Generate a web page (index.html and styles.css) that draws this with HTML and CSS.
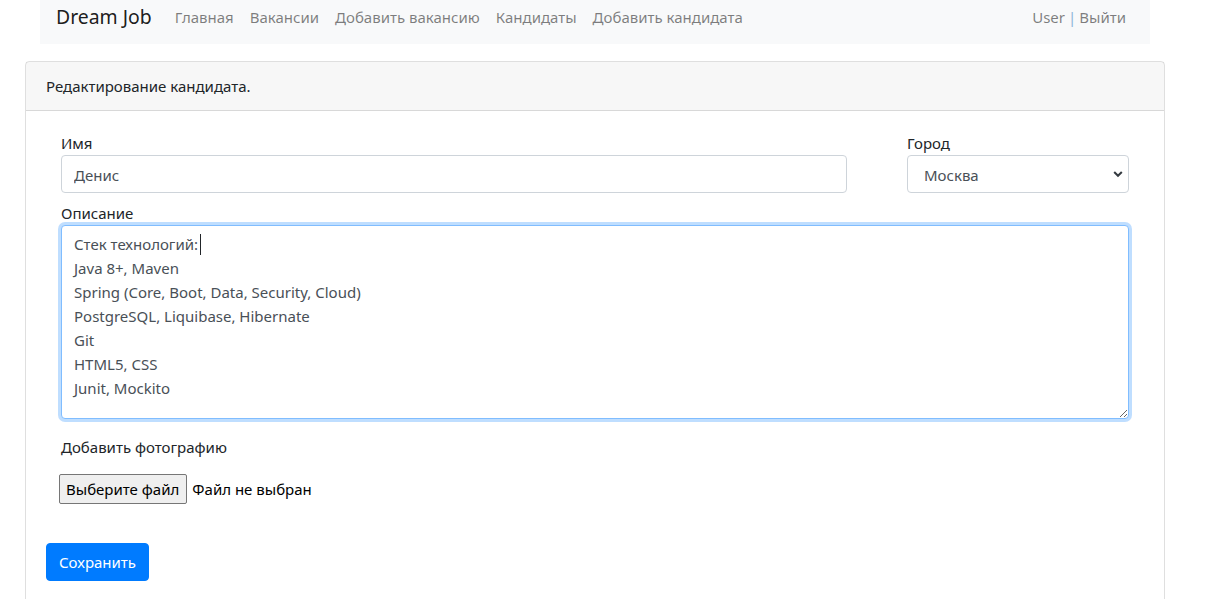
FILE: index.html
```html
<!DOCTYPE html>
<html lang="ru">
<head>
<meta charset="utf-8">
<title>Dream Job</title>
<link rel="stylesheet" href="styles.css">
</head>
<body>
<div class="page">
  <nav class="navbar">
    <a class="brand" href="#">Dream Job</a>
    <ul class="nav-links">
      <li><a href="#">Главная</a></li>
      <li><a href="#">Вакансии</a></li>
      <li><a href="#">Добавить вакансию</a></li>
      <li><a href="#">Кандидаты</a></li>
      <li><a href="#">Добавить кандидата</a></li>
    </ul>
    <div class="nav-user"><a href="#">User</a><span class="sep">|</span><a href="#">Выйти</a></div>
  </nav>

  <div class="card">
    <div class="card-header">Редактирование кандидата.</div>
    <div class="card-body">
      <form class="form">
        <div class="row">
          <div class="field field-name">
            <label for="name">Имя</label>
            <input id="name" class="control" type="text" value="Денис">
          </div>
          <div class="field field-city">
            <label for="city">Город</label>
            <div class="select-wrap">
              <select id="city" class="control select">
                <option>Москва</option>
                <option>Санкт-Петербург</option>
              </select>
              <svg class="chev" width="10" height="8" viewBox="0 0 10 8"><path d="M1.2 2 L5 5.8 L8.8 2" fill="none" stroke="#343a40" stroke-width="2"/></svg>
            </div>
          </div>
        </div>
        <div class="field">
          <label for="desc">Описание</label>
          <div class="ta-wrap">
            <textarea id="desc" class="control textarea focused" rows="7">Стек технологий:
Java 8+, Maven
Spring (Core, Boot, Data, Security, Cloud)
PostgreSQL, Liquibase, Hibernate
Git
HTML5, CSS
Junit, Mockito</textarea>
            <span class="caret"></span>
          </div>
        </div>
        <div class="field photo">
          <label for="file">Добавить фотографию</label>
          <div class="file-row">
            <span class="file-btn">Выберите файл</span><span class="file-text">Файл не выбран</span>
          </div>
        </div>
      </form>
      <button class="btn-save" type="button">Сохранить</button>
    </div>
  </div>
</div>
</body>
</html>
```

FILE: styles.css
```css
* { box-sizing: border-box; }
html, body { margin: 0; padding: 0; }
body {
  font-family: "Noto Sans", "Open Sans", sans-serif;
  font-size: 15px;
  line-height: 24px;
  color: #212529;
  background: #fff;
}
a { text-decoration: none; }
.page { padding: 0 42px 0 25px; }

.navbar {
  margin: 0 15px;
  height: 44px;
  background: #f8f9fa;
  display: flex;
  align-items: flex-start;
  padding: 4px 16px 0;
}
.brand {
  font-size: 19.4px;
  line-height: 26px;
  color: rgba(0,0,0,.9);
  margin-right: 15px;
}
.nav-links {
  display: flex;
  list-style: none;
  margin: 0;
  padding: 1px 0 0;
  flex: 1;
}
.nav-links a, .nav-user a {
  color: rgba(0,0,0,.5);
  padding: 0 8px;
  display: block;
}
.nav-user { display: flex; align-items: center; padding-top: 1px; }
.nav-user a:first-child { padding-right: 0; }
.nav-user .sep { color: #8db4d8; padding: 0 3px; }
.nav-user a:last-child { padding-left: 0; }

.card {
  margin-top: 17px;
  border: 1px solid rgba(0,0,0,.125);
  border-radius: 4px;
  height: 560px;
}
.card-header {
  background: rgba(0,0,0,.03);
  border-bottom: 1px solid rgba(0,0,0,.125);
  padding: 12px 20px;
  height: 49px;
}
.card-body { padding: 20px; }
.form { padding: 0 15px; }
.row { display: flex; gap: 60px; }
.field { display: flex; flex-direction: column; }
.field-name { flex: 1; }
.field-city { width: 222px; }
label { display: block; margin: 0; }

.control {
  font-family: inherit;
  font-size: 15px;
  line-height: 24px;
  color: #495057;
  background: #fff;
  border: 1px solid #ced4da;
  border-radius: 4px;
  padding: 7px 12px 5px;
  height: 38px;
  width: 100%;
  margin-bottom: 8px;
}
.select-wrap { position: relative; }
.select {
  -webkit-appearance: none;
  appearance: none;
  padding-left: 16px;
}
.chev { position: absolute; right: 6px; top: 15px; }

.ta-wrap { position: relative; }
.textarea {
  height: 194px;
  resize: vertical;
  display: block;
  margin-bottom: 16px;
  padding: 6px 12px;
}
.textarea.focused {
  border-color: #80bdff;
  box-shadow: 0 0 0 3px rgba(0,123,255,.25);
  outline: none;
}
.caret {
  position: absolute;
  left: 139px;
  top: 9px;
  width: 1px;
  height: 21px;
  background: #212529;
}

.photo label { margin-bottom: 15px; }
.file-row {
  display: flex;
  align-items: center;
  margin-left: -2px;
}
.file-btn {
  font-size: 15px;
  height: 30px;
  line-height: 28px;
  padding: 0 7px 0 6px;
  background: #efefef;
  border: 1px solid #767676;
  border-radius: 2px;
  color: #000;
}
.file-text {
  margin-left: 5px;
  color: #000;
}

.btn-save {
  margin-top: 39px;
  font-family: inherit;
  font-size: 15px;
  line-height: 24px;
  padding: 6px 12px;
  color: #fff;
  background: #007bff;
  border: 1px solid #007bff;
  border-radius: 4px;
  height: 38px;
  width: 103px;
}
```
